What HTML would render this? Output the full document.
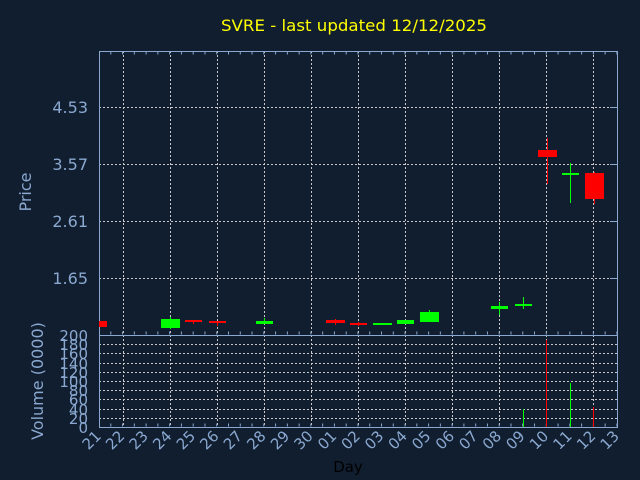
<!DOCTYPE html>
<html><head><meta charset="utf-8"><style>
html,body{margin:0;padding:0;background:#111e2f;}
svg{display:block;font-family:"DejaVu Sans","Liberation Sans",sans-serif;}
</style></head><body>
<svg width="640" height="480" viewBox="0 0 640 480" xmlns="http://www.w3.org/2000/svg">
<rect width="640" height="480" fill="#111e2f"/>
<text x="354" y="31" fill="#ffff00" font-size="16" text-anchor="middle" textLength="266" lengthAdjust="spacingAndGlyphs">SVRE - last updated 12/12/2025</text>
<g stroke="#c8c8c8" stroke-width="1" stroke-dasharray="2 2">
<line x1="99" y1="107.5" x2="617" y2="107.5"/>
<line x1="99" y1="164.5" x2="617" y2="164.5"/>
<line x1="99" y1="221.5" x2="617" y2="221.5"/>
<line x1="99" y1="278.5" x2="617" y2="278.5"/>
<line x1="99" y1="344.5" x2="617" y2="344.5"/>
<line x1="99" y1="353.5" x2="617" y2="353.5"/>
<line x1="99" y1="363.5" x2="617" y2="363.5"/>
<line x1="99" y1="372.5" x2="617" y2="372.5"/>
<line x1="99" y1="381.5" x2="617" y2="381.5"/>
<line x1="99" y1="390.5" x2="617" y2="390.5"/>
<line x1="99" y1="399.5" x2="617" y2="399.5"/>
<line x1="99" y1="409.5" x2="617" y2="409.5"/>
<line x1="99" y1="418.5" x2="617" y2="418.5"/>
<line x1="123.5" y1="51" x2="123.5" y2="427"/>
<line x1="170.5" y1="51" x2="170.5" y2="427"/>
<line x1="217.5" y1="51" x2="217.5" y2="427"/>
<line x1="264.5" y1="51" x2="264.5" y2="427"/>
<line x1="311.5" y1="51" x2="311.5" y2="427"/>
<line x1="358.5" y1="51" x2="358.5" y2="427"/>
<line x1="405.5" y1="51" x2="405.5" y2="427"/>
<line x1="452.5" y1="51" x2="452.5" y2="427"/>
<line x1="499.5" y1="51" x2="499.5" y2="427"/>
<line x1="546.5" y1="51" x2="546.5" y2="427"/>
<line x1="593.5" y1="51" x2="593.5" y2="427"/>
</g>
<g stroke="#8aa8d0" fill="none">
<rect x="99.5" y="51.5" width="518" height="376"/>
<line x1="99" y1="335.5" x2="617" y2="335.5"/>
<line x1="99" y1="53" x2="617" y2="53" stroke-width="3" stroke-dasharray="1 10.77" stroke-dashoffset="-11.3"/>
<line x1="99" y1="333" x2="617" y2="333" stroke-width="3" stroke-dasharray="1 10.77" stroke-dashoffset="-11.3"/>
<line x1="99" y1="425" x2="617" y2="425" stroke-width="3" stroke-dasharray="1 10.77" stroke-dashoffset="-11.3"/>
<line x1="610" y1="107.5" x2="617" y2="107.5"/>
<line x1="610" y1="164.5" x2="617" y2="164.5"/>
<line x1="610" y1="221.5" x2="617" y2="221.5"/>
<line x1="610" y1="278.5" x2="617" y2="278.5"/>
</g>
<g fill="#8aa8d0" font-size="16" text-anchor="end">
<text x="88" y="113">4.53</text>
<text x="88" y="170">3.57</text>
<text x="88" y="227">2.61</text>
<text x="88" y="284">1.65</text>
</g>
<text transform="translate(31,192) rotate(-90)" fill="#8aa8d0" font-size="16" text-anchor="middle">Price</text>
<text transform="translate(43,381) rotate(-90)" fill="#8aa8d0" font-size="16" text-anchor="middle">Volume (0000)</text>
<g fill="#8aa8d0" font-size="15" text-anchor="end">
<text x="88" y="341">200</text>
<text x="88" y="350">180</text>
<text x="88" y="359">160</text>
<text x="88" y="369">140</text>
<text x="88" y="378">120</text>
<text x="88" y="387">100</text>
<text x="88" y="396">80</text>
<text x="88" y="405">60</text>
<text x="88" y="415">40</text>
<text x="88" y="424">20</text>
<text x="88" y="433">0</text>
</g>
<g fill="#8aa8d0" font-size="15" text-anchor="end">
<text transform="translate(102,437) rotate(-45)">21</text>
<text transform="translate(125.5,437) rotate(-45)">22</text>
<text transform="translate(149,437) rotate(-45)">23</text>
<text transform="translate(172.6,437) rotate(-45)">24</text>
<text transform="translate(196.2,437) rotate(-45)">25</text>
<text transform="translate(219.7,437) rotate(-45)">26</text>
<text transform="translate(243.3,437) rotate(-45)">27</text>
<text transform="translate(266.8,437) rotate(-45)">28</text>
<text transform="translate(290.4,437) rotate(-45)">29</text>
<text transform="translate(313.9,437) rotate(-45)">30</text>
<text transform="translate(337.5,437) rotate(-45)">01</text>
<text transform="translate(361,437) rotate(-45)">02</text>
<text transform="translate(384.5,437) rotate(-45)">03</text>
<text transform="translate(408,437) rotate(-45)">04</text>
<text transform="translate(431.6,437) rotate(-45)">05</text>
<text transform="translate(455.2,437) rotate(-45)">06</text>
<text transform="translate(478.7,437) rotate(-45)">07</text>
<text transform="translate(502.3,437) rotate(-45)">08</text>
<text transform="translate(525.8,437) rotate(-45)">09</text>
<text transform="translate(549.4,437) rotate(-45)">10</text>
<text transform="translate(572.9,437) rotate(-45)">11</text>
<text transform="translate(596.5,437) rotate(-45)">12</text>
<text transform="translate(620,437) rotate(-45)">13</text>
</g>
<text x="348" y="472" fill="#000000" font-size="15" text-anchor="middle">Day</text>
<!-- candles -->
<g>
<rect x="99" y="321" width="8" height="6" fill="#ff0000"/>
<line x1="170.5" y1="317" x2="170.5" y2="329" stroke="#00ff00"/>
<rect x="161" y="319" width="19" height="9" fill="#00ff00"/>
<line x1="193.5" y1="320" x2="193.5" y2="324" stroke="#ff0000"/>
<rect x="185" y="320" width="17" height="2" fill="#ff0000"/>
<line x1="217.5" y1="321" x2="217.5" y2="326" stroke="#ff0000"/>
<rect x="209" y="321" width="17" height="2" fill="#ff0000"/>
<line x1="264.5" y1="318" x2="264.5" y2="324" stroke="#00ff00"/>
<rect x="256" y="321" width="17" height="3" fill="#00ff00"/>
<line x1="335.5" y1="319" x2="335.5" y2="325" stroke="#ff0000"/>
<rect x="326" y="320" width="19" height="3" fill="#ff0000"/>
<line x1="358.5" y1="322" x2="358.5" y2="326" stroke="#ff0000"/>
<rect x="350" y="323" width="17" height="2" fill="#ff0000"/>
<rect x="373" y="323" width="19" height="2" fill="#00ff00"/>
<rect x="397" y="320" width="17" height="4" fill="#00ff00"/>
<line x1="429.5" y1="310" x2="429.5" y2="322" stroke="#00ff00"/>
<rect x="420" y="312" width="19" height="10" fill="#00ff00"/>
<line x1="499.5" y1="302" x2="499.5" y2="315" stroke="#00ff00"/>
<rect x="491" y="306" width="17" height="3" fill="#00ff00"/>
<line x1="523.5" y1="297" x2="523.5" y2="309" stroke="#00ff00"/>
<rect x="515" y="304" width="17" height="2" fill="#00ff00"/>
<line x1="547.5" y1="138" x2="547.5" y2="184" stroke="#ff0000"/>
<rect x="538" y="150" width="19" height="7" fill="#ff0000"/>
<line x1="570.5" y1="163" x2="570.5" y2="203" stroke="#00ff00"/>
<rect x="562" y="173" width="17" height="2" fill="#00ff00"/>
<line x1="594.5" y1="172" x2="594.5" y2="204" stroke="#ff0000"/>
<rect x="585" y="173" width="19" height="26" fill="#ff0000"/>
</g>
<g stroke-width="1">
<line x1="523.5" y1="409" x2="523.5" y2="427" stroke="#00ff00"/>
<line x1="546.5" y1="340" x2="546.5" y2="427" stroke="#ff0000"/>
<line x1="570.5" y1="383" x2="570.5" y2="427" stroke="#00ff00"/>
<line x1="593.5" y1="407" x2="593.5" y2="427" stroke="#ff0000"/>
</g>
</svg>
</body></html>
